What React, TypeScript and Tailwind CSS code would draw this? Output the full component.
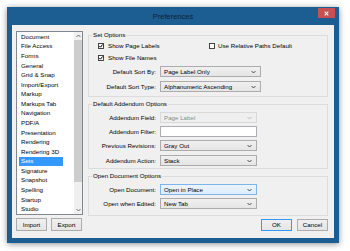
import React from "react";

function Chevron({ color = "#3c3c3c", up = false }: { color?: string; up?: boolean }) {
  return (
    <svg width="5" height="4" viewBox="0 0 5 4" className="shrink-0">
      <path
        d={up ? "M0.5 3 L2.5 1 L4.5 3" : "M0.5 1 L2.5 3 L4.5 1"}
        fill="none"
        stroke={color}
        strokeWidth="0.9"
      />
    </svg>
  );
}

function Check({ checked = false }: { checked?: boolean }) {
  return (
    <svg width="6" height="6" viewBox="0 0 6 6" className="shrink-0">
      <rect x="0.5" y="0.5" width="5" height="5" fill="#fff" stroke="#333" strokeWidth="0.9" />
      {checked && (
        <path d="M1.3 2.9 L2.5 4.2 L4.7 1.4" fill="none" stroke="#000" strokeWidth="1" />
      )}
    </svg>
  );
}

type ComboKind = "normal" | "disabled" | "focus";

function Combo({ text, wide = false, kind = "normal" }: { text: string; wide?: boolean; kind?: ComboKind }) {
  const base = "flex h-[11px] items-center justify-between border pl-[3px] pr-[4px]";
  const w = wide ? "w-[101px]" : "w-[97px]";
  const style =
    kind === "disabled"
      ? "border-[#d9d9d9] bg-[#efefef] text-[#8d8d8d]"
      : kind === "focus"
      ? "border-[#7eb4ea] bg-gradient-to-b from-[#ecf4fc] to-[#dcecfc] text-black"
      : "border-[#acacac] bg-gradient-to-b from-[#f0f0f0] to-[#e5e5e5] text-black";
  return (
    <div className={`${base} ${w} ${style}`}>
      <span className="leading-[8px]">{text}</span>
      <Chevron color={kind === "disabled" ? "#b5b5b5" : "#3c3c3c"} />
    </div>
  );
}

function Row({ label, children, className = "" }: { label: string; children: React.ReactNode; className?: string }) {
  return (
    <div className={`flex items-center gap-[4px] ${className}`}>
      <div className="w-[67px] text-right leading-[8px]">{label}</div>
      {children}
    </div>
  );
}

function Btn({ text, def = false }: { text: string; def?: boolean }) {
  return (
    <div
      className={`flex h-full w-[31px] items-center justify-center border bg-gradient-to-b from-[#f0f0f0] to-[#e5e5e5] leading-[8px] ${
        def ? "border-[#3399ff]" : "border-[#acacac]"
      }`}
    >
      {text}
    </div>
  );
}

const items = [
  "Document",
  "File Access",
  "Forms",
  "General",
  "Grid & Snap",
  "Import/Export",
  "Markup",
  "Markups Tab",
  "Navigation",
  "PDF/A",
  "Presentation",
  "Rendering",
  "Rendering 3D",
  "Sets",
  "Signature",
  "Snapshot",
  "Spelling",
  "Startup",
  "Studio",
];

export default function App() {
  return (
    <div className="h-[251px] w-[350px] overflow-hidden bg-white pl-[7px] pt-[7px] font-['Liberation_Sans',Arial,sans-serif] text-[6.2px] text-black">
      <div className="flex h-[236px] w-[332px] flex-col bg-[#1d5e92] shadow-[0_1px_6px_rgba(0,0,0,0.45)]">
        {/* title bar */}
        <div className="grid h-[18px] shrink-0 grid-cols-[1fr_auto_1fr]">
          <div />
          <div className="self-center text-[7.5px] leading-[9px] text-[#0d2236]">Preferences</div>
          <div className="flex justify-end">
            <div className="mr-[4px] mt-[1px] flex h-[10px] w-[17px] items-center justify-center bg-[#c75050]">
              <svg width="5" height="5" viewBox="0 0 5 5">
                <path d="M0.7 0.7 L4.3 4.3 M4.3 0.7 L0.7 4.3" stroke="#fff" strokeWidth="1.1" />
              </svg>
            </div>
          </div>
        </div>
        {/* client */}
        <div className="mx-[5px] mb-[5px] flex flex-1 bg-[#f0f0f0]">
          {/* left column */}
          <div className="ml-[4px] flex w-[68px] flex-col pt-[6px]">
            <div className="flex h-[184px] w-[67px] border border-[#828790] bg-white">
              <div className="flex flex-1 flex-col">
                {items.map((it) => (
                  <div key={it} className="flex h-[9.75px] items-center pl-[2px]">
                    <div
                      className={`flex h-full w-[44px] items-center px-[2px] leading-[8px] ${
                        it === "Sets" ? "bg-[#3399ff] text-white" : ""
                      }`}
                    >
                      {it}
                    </div>
                  </div>
                ))}
              </div>
              <div className="flex w-[8px] flex-col bg-[#f0f0f0]">
                <div className="flex h-[8px] items-center justify-center">
                  <Chevron up color="#606060" />
                </div>
                <div className="h-[142px] bg-[#cdcdcd]" />
                <div className="flex-1" />
                <div className="flex h-[8px] items-center justify-center">
                  <Chevron color="#606060" />
                </div>
              </div>
            </div>
            <div className="mt-[3px] flex h-[13px] gap-[4px]">
              <Btn text="Import" />
              <Btn text="Export" />
            </div>
          </div>

          {/* right column */}
          <div className="ml-[4px] flex w-[240px] flex-col pt-[6px]">
            <fieldset className="border border-[#dcdcdc] pb-[4px]">
              <legend className="ml-[3px] px-[1px] leading-[8px]">Set Options</legend>
              <div className="flex flex-col pt-[3px]">
                <div className="flex h-[8px] items-center pl-[9px]">
                  <div className="flex w-[111px] items-center gap-[4px]">
                    <Check checked />
                    <span className="leading-[8px]">Show Page Labels</span>
                  </div>
                  <div className="flex items-center gap-[3px]">
                    <Check />
                    <span className="leading-[8px]">Use Relative Paths Default</span>
                  </div>
                </div>
                <div className="mt-[4px] flex h-[8px] items-center gap-[4px] pl-[9px]">
                  <Check checked />
                  <span className="leading-[8px]">Show File Names</span>
                </div>
                <Row className="mt-[4px]" label="Default Sort By:">
                  <Combo wide text="Page Label Only" />
                </Row>
                <Row className="mt-[4px]" label="Default Sort Type:">
                  <Combo wide text="Alphanumeric Ascending" />
                </Row>
              </div>
            </fieldset>

            <fieldset className="mt-[3px] border border-[#dcdcdc] pb-[2px]">
              <legend className="ml-[3px] px-[1px] leading-[8px]">Default Addendum Options</legend>
              <div className="flex flex-col pt-[4px]">
                <Row label="Addendum Field:">
                  <Combo kind="disabled" text="Page Label" />
                </Row>
                <Row className="mt-[3px]" label="Addendum Filter:">
                  <div className="h-[11px] w-[97px] border border-[#abadb3] bg-white" />
                </Row>
                <Row className="mt-[3px]" label="Previous Revisions:">
                  <Combo text="Gray Out" />
                </Row>
                <Row className="mt-[4px]" label="Addendum Action:">
                  <Combo text="Stack" />
                </Row>
              </div>
            </fieldset>

            <fieldset className="mt-[3px] border border-[#dcdcdc] pb-[6px]">
              <legend className="ml-[3px] px-[1px] leading-[8px]">Open Document Options</legend>
              <div className="flex flex-col pt-[4px]">
                <Row label="Open Document:">
                  <Combo kind="focus" text="Open in Place" />
                </Row>
                <Row className="mt-[3px]" label="Open when Edited:">
                  <Combo text="New Tab" />
                </Row>
              </div>
            </fieldset>

            <div className="mt-[3px] flex h-[12px] justify-end gap-[5px]">
              <Btn def text="OK" />
              <Btn text="Cancel" />
            </div>
          </div>
        </div>
      </div>
    </div>
  );
}
